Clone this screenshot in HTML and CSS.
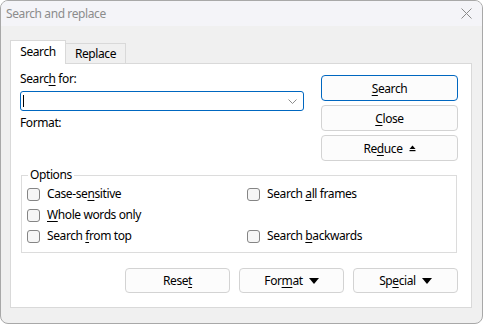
FILE: index.html
```html
<!DOCTYPE html>
<html lang="en">
<head>
  <meta charset="UTF-8">
  <title>Search and replace</title>
  <link rel="stylesheet" href="styles.css">
</head>
<body>
<div class="window">
  <div class="titlebar">
    <span class="titlebar__text">Search and replace</span>
    <svg class="titlebar__close" width="11" height="11" viewBox="0 0 11 11">
      <path d="M0.5 0.5 L10.5 10.5 M10.5 0.5 L0.5 10.5" stroke="#8a8a8a" stroke-width="1" fill="none"/>
    </svg>
  </div>

  <div class="client">
    <div class="tabs">
      <div class="tab tab--active">Search</div>
      <div class="tab">Replace</div>
    </div>

    <div class="panel">
      <div class="top">
        <div class="fields">
          <div class="label">Searc<u>h</u> for:</div>
          <div class="combo">
            <span class="combo__caret"></span>
            <svg class="combo__arrow" width="9" height="5" viewBox="0 0 9 5">
              <path d="M0.5 0.5 L4.5 4.5 L8.5 0.5" stroke="#8c8c8c" stroke-width="1" fill="none"/>
            </svg>
          </div>
          <div class="label label--format">Format:</div>
        </div>
        <div class="actions">
          <button class="btn btn--default"><span><u>S</u>earch</span></button>
          <button class="btn"><span><u>C</u>lose</span></button>
          <button class="btn"><span>Re<u>d</u>uce</span>
            <svg class="btn__icon" width="7" height="7" viewBox="0 0 7 7">
              <path d="M3.5 0.5 L6.5 4 L0.5 4 Z" fill="#000"/>
              <rect x="0.5" y="5" width="6" height="1.2" fill="#000"/>
            </svg>
          </button>
        </div>
      </div>

      <fieldset class="options">
        <legend>Options</legend>
        <div class="options__grid">
          <label class="check"><span class="check__box"></span><span>Case-se<u>n</u>sitive</span></label>
          <label class="check"><span class="check__box"></span><span>Search <u>a</u>ll frames</span></label>
          <label class="check"><span class="check__box"></span><span><u>W</u>hole words only</span></label>
          <span></span>
          <label class="check"><span class="check__box"></span><span>Search <u>f</u>rom top</span></label>
          <label class="check"><span class="check__box"></span><span>Search <u>b</u>ackwards</span></label>
        </div>
      </fieldset>

      <div class="footer">
        <button class="btn btn--wide"><span>Rese<u>t</u></span></button>
        <button class="btn btn--wide"><span>For<u>m</u>at</span>
          <svg class="btn__icon" width="10" height="6" viewBox="0 0 10 6"><path d="M0 0 L10 0 L5 6 Z" fill="#000"/></svg>
        </button>
        <button class="btn btn--wide"><span>Sp<u>e</u>cial</span>
          <svg class="btn__icon" width="10" height="6" viewBox="0 0 10 6"><path d="M0 0 L10 0 L5 6 Z" fill="#000"/></svg>
        </button>
      </div>
    </div>
  </div>
</div>
</body>
</html>
```

FILE: styles.css
```css
* {
  box-sizing: border-box;
}
body {
  margin: 0;
  font-family: "Segoe UI", "Noto Sans", "Liberation Sans", sans-serif;
  font-size: 12px;
  letter-spacing: -0.4px;
  color: #000;
  background: #fff;
}
u {
  text-decoration: underline;
  text-underline-offset: 2px;
}
.window {
  width: 483px;
  height: 324px;
  border: 1px solid #a8a8a8;
  border-radius: 8px;
  overflow: hidden;
  background: #f0f0f0;
  display: flex;
  flex-direction: column;
}
.titlebar {
  height: 25px;
  flex: none;
  background: #f4f4f8;
  display: flex;
  align-items: center;
  justify-content: space-between;
  padding: 0 10px 0 5px;
}
.titlebar__text {
  color: #8c8c8c;
  line-height: 16px;
}
.titlebar__close {
  display: block;
}
.client {
  flex: 1;
  display: flex;
  flex-direction: column;
  padding: 14px 10px 15px 9px;
}
.tabs {
  display: flex;
  align-items: flex-end;
  margin-bottom: -1px;
}
.tab {
  width: 60px;
  height: 20px;
  margin-bottom: 1px;
  border: 1px solid #d9d9d9;
  border-left: none;
  border-bottom: none;
  background: #f0f0f0;
  text-align: center;
  line-height: 19px;
}
.tab--active {
  position: relative;
  z-index: 1;
  width: 56px;
  height: 24px;
  margin-bottom: 0;
  border-left: 1px solid #d9d9d9;
  background: #fff;
  line-height: 21px;
}
.panel {
  flex: 1;
  border: 1px solid #d9d9d9;
  background: #fff;
  padding: 7px 13px 0 9px;
}
.top {
  display: flex;
  gap: 17px;
}
.fields {
  width: 284px;
}
.label {
  line-height: 16px;
}
.label--format {
  margin-top: 4px;
}
.combo {
  margin-top: 4px;
  height: 20px;
  border: 1px solid #0067c0;
  border-radius: 3px;
  display: flex;
  align-items: center;
  justify-content: space-between;
  padding: 0 6px 0 2px;
}
.combo__caret {
  width: 1px;
  height: 12px;
  background: #000;
}
.combo__arrow {
  display: block;
}
.actions {
  flex: 1;
  margin-top: 4px;
  display: flex;
  flex-direction: column;
  gap: 4px;
}
.btn {
  height: 26px;
  border: 1px solid #d3d3d3;
  border-radius: 4px;
  background: #fcfcfc;
  font: inherit;
  letter-spacing: inherit;
  color: #000;
  padding: 0;
  display: flex;
  align-items: center;
  justify-content: center;
  gap: 6px;
}
.btn--default {
  border-color: #0067c0;
}
.btn__icon {
  display: block;
}
.options {
  margin: 6px 1px 0 1px;
  border: 1px solid #dcdcdc;
  padding: 0 0 6px 5px;
}
.options legend {
  padding: 0 2px;
  margin-left: 1px;
  line-height: 16px;
}
.options__grid {
  display: grid;
  grid-template-columns: 220px 1fr;
  grid-auto-rows: 21px;
}
.check {
  display: flex;
  align-items: center;
  gap: 7px;
}
.check__box {
  width: 13px;
  height: 13px;
  border: 1px solid #858585;
  border-radius: 3px;
  background: #f6f6f6;
  margin-top: 1px;
}
.footer {
  margin-top: 15px;
  display: flex;
  justify-content: flex-end;
  gap: 9px;
}
.btn--wide {
  width: 105px;
  height: 25px;
}
```
